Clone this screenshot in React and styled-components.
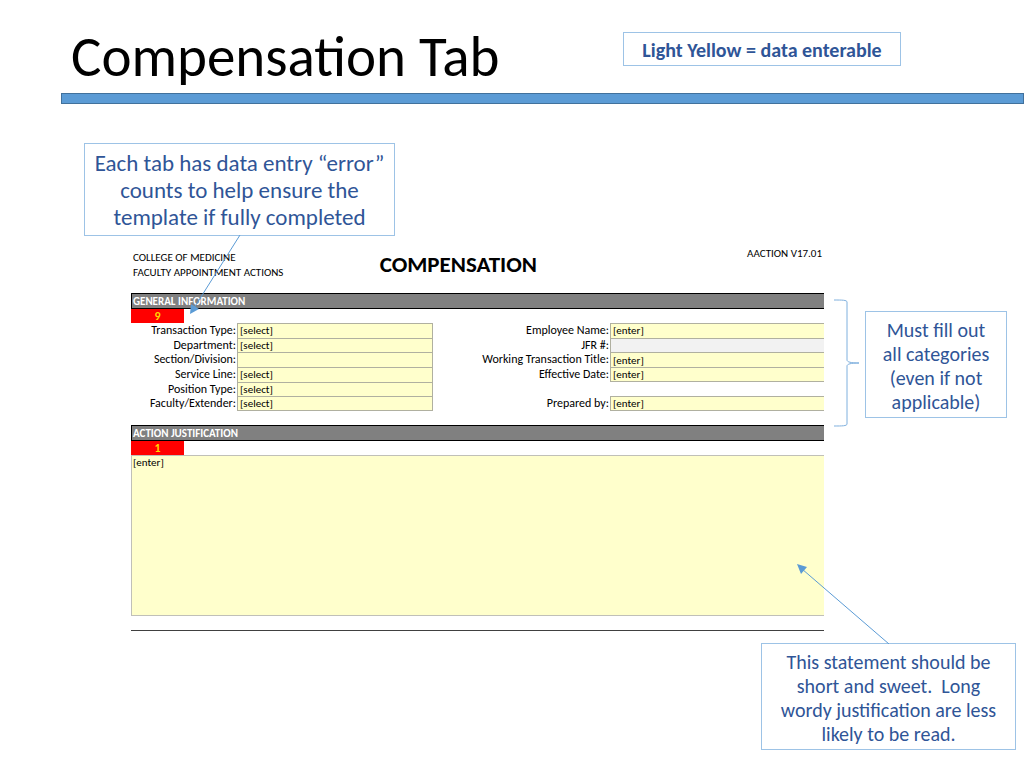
import React from "react";
import styled, { createGlobalStyle } from "styled-components";

const GlobalStyle = createGlobalStyle`
  *, *::before, *::after { box-sizing: border-box; }
  body {
    margin: 0;
    background: #ffffff;
    color: #000000;
    font-family: Carlito, Lato, "Liberation Sans", sans-serif;
  }
`;

const Slide = styled.main`
  display: flex;
  flex-direction: column;
  padding-bottom: 18px;
`;

const SlideHeader = styled.header`
  display: flex;
  align-items: flex-start;
  justify-content: space-between;
  height: 93px;
  padding: 24px 123px 0 71px;
`;

const SlideTitle = styled.h1`
  margin: 0;
  font-size: 57px;
  font-weight: 400;
  line-height: 66px;
  white-space: nowrap;
`;

const Rule = styled.div`
  height: 11px;
  margin-left: 61px;
  background: #5b9bd5;
  border: 1px solid #41719c;
`;

const Callout = styled.aside`
  position: relative;
  flex: none;
  width: ${(p) => p.$width}px;
  padding: 6px 0 3px;
  border: 1px solid #9dc3e6;
  background: #ffffff;
  color: #2f5597;
  font-size: 20px;
  line-height: 24px;
  text-align: center;
  white-space: pre-line;
`;

const Legend = styled(Callout)`
  margin-top: 8px;
  padding-top: 5px;
  font-weight: 700;
`;

const LargeCallout = styled(Callout)`
  padding-bottom: 4px;
  font-size: 23px;
  line-height: 27px;
`;

const TopNote = styled.div`
  display: flex;
  padding: 39px 0 0 84px;
`;

const BottomNote = styled.div`
  display: flex;
  justify-content: flex-end;
  padding: 12px 8px 0 0;
`;

const ArrowDown = styled.svg`
  position: absolute;
  top: 100%;
  left: 104px;
  z-index: 1;
  pointer-events: none;
`;

const ArrowUp = styled.svg`
  position: absolute;
  bottom: 100%;
  left: 34px;
  z-index: 1;
  pointer-events: none;
`;

const Body = styled.div`
  display: flex;
  padding: 11px 17px 0 131px;
`;

const SideNote = styled.div`
  display: flex;
  align-items: flex-start;
  flex: none;
  gap: 6px;
  padding: 52px 0 0 10px;
`;

const SideCallout = styled(Callout)`
  margin-top: 12px;
`;

const Sheet = styled.form`
  flex: 1;
  min-width: 0;
  font-size: 11px;
  line-height: 15px;
  border-bottom: 1px solid #404040;
  padding-bottom: 14px;
`;

const SheetHeader = styled.div`
  display: grid;
  grid-template-columns: 249fr 365fr 80fr;
  height: 46px;
  white-space: nowrap;
`;

const Org = styled.p`
  margin: 0;
  padding: 3px 2px;
`;

const SheetTitle = styled.h2`
  margin: 0;
  padding-top: 3px;
  font-size: 23px;
  line-height: 28px;
`;

const Version = styled.p`
  margin: 0;
  padding-right: 2px;
  line-height: 14px;
  text-align: right;
`;

const Band = styled.h3`
  height: 16px;
  margin: 0;
  padding-left: 1px;
  background: #808080;
  border: solid #000000;
  border-width: 1px 0 1px 1px;
  color: #ffffff;
  font-size: 11px;
  line-height: 15px;
`;

const CountRow = styled.div`
  height: 14px;
`;

const ErrorCount = styled.output`
  display: block;
  width: 53px;
  height: 14px;
  background: #ff0000;
  color: #ffd800;
  font-size: 12px;
  font-weight: 700;
  line-height: 14px;
  text-align: center;
`;

const Fields = styled.div`
  display: grid;
  grid-template-columns: 106fr 196fr 177fr 214fr;
  grid-template-rows: repeat(6, minmax(0, 1fr));
  height: 88px;
  margin-bottom: 14px;
`;

const Label = styled.label`
  grid-column: ${(p) => p.$col};
  grid-row: ${(p) => p.$row};
  padding-right: 1px;
  font-size: 12px;
  text-align: right;
  white-space: nowrap;
`;

const Control = styled.input`
  grid-column: ${(p) => p.$col};
  grid-row: ${(p) => p.$row};
  appearance: none;
  display: block;
  width: 100%;
  min-width: 0;
  height: 100%;
  min-height: 0;
  margin: 0;
  padding: 0 0 0 2px;
  border: solid #b0b0a0;
  border-width: 1px ${(p) => (p.$col === 2 ? 1 : 0)}px ${(p) => (p.$last ? 1 : 0)}px 1px;
  border-radius: 0;
  outline: none;
  background: ${(p) => (p.readOnly ? "#f2f2f2" : "#ffffcc")};
  color: #000000;
  font: inherit;
  line-height: 13px;
`;

const Justification = styled.textarea`
  display: block;
  width: 100%;
  height: 161px;
  margin: 0;
  padding: 0 1px;
  border: solid #c0c0b8;
  border-width: 1px 0 1px 1px;
  border-radius: 0;
  outline: none;
  resize: none;
  background: #ffffcc;
  color: #000000;
  font: inherit;
  line-height: 14px;
`;

const leftFields = [
  { id: "transaction-type", label: "Transaction Type:", value: "[select]" },
  { id: "department", label: "Department:", value: "[select]" },
  { id: "section", label: "Section/Division:", value: "" },
  { id: "service-line", label: "Service Line:", value: "[select]" },
  { id: "position-type", label: "Position Type:", value: "[select]" },
  { id: "faculty", label: "Faculty/Extender:", value: "[select]", last: true },
];

const rightFields = [
  { id: "employee-name", label: "Employee Name:", value: "[enter]", row: 1 },
  { id: "jfr", label: "JFR #:", value: "", row: 2, readOnly: true },
  { id: "title", label: "Working Transaction Title:", value: "[enter]", row: 3 },
  { id: "date", label: "Effective Date:", value: "[enter]", row: 4, last: true },
  { id: "prepared-by", label: "Prepared by:", value: "[enter]", row: 6, last: true },
];

export default function App() {
  return (
    <>
      <GlobalStyle />
      <Slide>
        <SlideHeader>
          <SlideTitle>Compensation Tab</SlideTitle>
          <Legend $width={278}>Light Yellow = data enterable</Legend>
        </SlideHeader>
        <Rule />

        <TopNote>
          <LargeCallout $width={311}>
            {"Each tab has data entry “error”\ncounts to help ensure the\ntemplate if fully completed"}
            <ArrowDown width="54" height="82" viewBox="0 0 54 82" aria-hidden="true">
              <path d="M51 0 L5 73" stroke="#5b9bd5" fill="none" />
              <path d="M1 79 L2 69 L10 74 Z" fill="#5b9bd5" />
            </ArrowDown>
          </LargeCallout>
        </TopNote>

        <Body>
          <Sheet onSubmit={(e) => e.preventDefault()}>
            <SheetHeader>
              <Org>
                COLLEGE OF MEDICINE
                <br />
                FACULTY APPOINTMENT ACTIONS
              </Org>
              <SheetTitle>COMPENSATION</SheetTitle>
              <Version>AACTION V17.01</Version>
            </SheetHeader>

            <Band>GENERAL INFORMATION</Band>
            <CountRow>
              <ErrorCount>9</ErrorCount>
            </CountRow>
            <Fields>
              {leftFields.map((f, i) => (
                <React.Fragment key={f.id}>
                  <Label htmlFor={f.id} $col={1} $row={i + 1}>
                    {f.label}
                  </Label>
                  <Control as="select" id={f.id} $col={2} $row={i + 1} $last={f.last}>
                    <option>{f.value}</option>
                  </Control>
                </React.Fragment>
              ))}
              {rightFields.map((f) => (
                <React.Fragment key={f.id}>
                  <Label htmlFor={f.id} $col={3} $row={f.row}>
                    {f.label}
                  </Label>
                  <Control
                    id={f.id}
                    type="text"
                    defaultValue={f.value}
                    readOnly={f.readOnly}
                    $col={4}
                    $row={f.row}
                    $last={f.last}
                  />
                </React.Fragment>
              ))}
            </Fields>

            <Band id="justification-heading">ACTION JUSTIFICATION</Band>
            <CountRow>
              <ErrorCount>1</ErrorCount>
            </CountRow>
            <Justification aria-labelledby="justification-heading" defaultValue="[enter]" />
          </Sheet>

          <SideNote>
            <svg width="25" height="128" viewBox="0 0 25 128" fill="none" stroke="#7fb0de" aria-hidden="true">
              <path d="M0 1 C8 1 13 1 13 3 V61 C13 63 17 64 25 64 C17 64 13 65 13 67 V125 C13 127 8 127 0 127" />
            </svg>
            <SideCallout $width={142}>
              {"Must fill out\nall categories\n(even if not\napplicable)"}
            </SideCallout>
          </SideNote>
        </Body>

        <BottomNote>
          <Callout $width={255}>
            {"This statement should be\nshort and sweet.\u00a0 Long\nwordy justification are less\nlikely to be read."}
            <ArrowUp width="96" height="82" viewBox="0 0 96 82" aria-hidden="true">
              <path d="M93 82 L6 7" stroke="#5b9bd5" fill="none" />
              <path d="M1 2 L11 5 L5 12 Z" fill="#5b9bd5" />
            </ArrowUp>
          </Callout>
        </BottomNote>
      </Slide>
    </>
  );
}
